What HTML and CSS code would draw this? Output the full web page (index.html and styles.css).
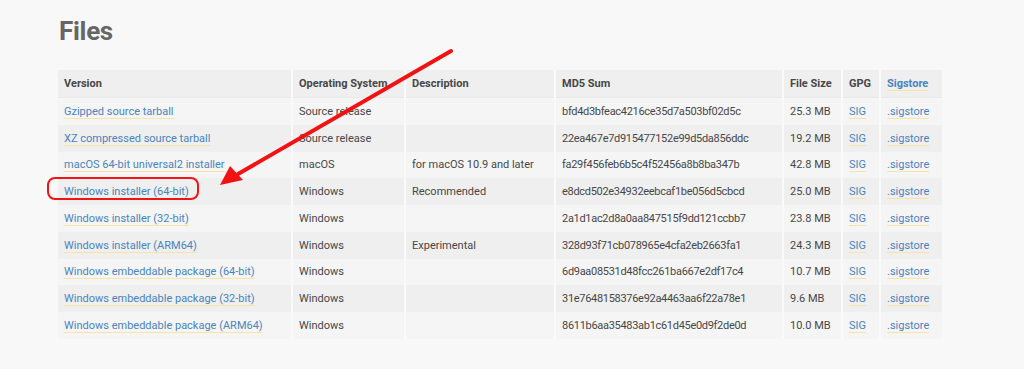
FILE: index.html
```html
<!DOCTYPE html>
<html lang="en">
<head>
    <meta charset="UTF-8">
    <meta name="viewport" content="width=device-width, initial-scale=1.0">
    <title>Files</title>
    <link rel="stylesheet" href="styles.css">
</head>
<body>
    <div class="page">
        <h2 class="title">Files</h2>

        <table class="files">
            <colgroup>
                <col class="c-version">
                <col class="c-os">
                <col class="c-desc">
                <col class="c-md5">
                <col class="c-size">
                <col class="c-gpg">
                <col class="c-sig">
            </colgroup>
            <thead>
                <tr>
                    <th>Version</th>
                    <th>Operating System</th>
                    <th>Description</th>
                    <th>MD5 Sum</th>
                    <th>File Size</th>
                    <th>GPG</th>
                    <th><a href="#">Sigstore</a></th>
                </tr>
            </thead>
            <tbody>
                <tr>
                    <td><a href="#">Gzipped source tarball</a></td>
                    <td>Source release</td>
                    <td></td>
                    <td class="md5">bfd4d3bfeac4216ce35d7a503bf02d5c</td>
                    <td>25.3 MB</td>
                    <td><a href="#">SIG</a></td>
                    <td><a href="#">.sigstore</a></td>
                </tr>
                <tr>
                    <td><a href="#">XZ compressed source tarball</a></td>
                    <td>Source release</td>
                    <td></td>
                    <td class="md5">22ea467e7d915477152e99d5da856ddc</td>
                    <td>19.2 MB</td>
                    <td><a href="#">SIG</a></td>
                    <td><a href="#">.sigstore</a></td>
                </tr>
                <tr>
                    <td><a href="#">macOS 64-bit universal2 installer</a></td>
                    <td>macOS</td>
                    <td>for macOS 10.9 and later</td>
                    <td class="md5">fa29f456feb6b5c4f52456a8b8ba347b</td>
                    <td>42.8 MB</td>
                    <td><a href="#">SIG</a></td>
                    <td><a href="#">.sigstore</a></td>
                </tr>
                <tr>
                    <td><a href="#">Windows installer (64-bit)</a></td>
                    <td>Windows</td>
                    <td>Recommended</td>
                    <td class="md5">e8dcd502e34932eebcaf1be056d5cbcd</td>
                    <td>25.0 MB</td>
                    <td><a href="#">SIG</a></td>
                    <td><a href="#">.sigstore</a></td>
                </tr>
                <tr>
                    <td><a href="#">Windows installer (32-bit)</a></td>
                    <td>Windows</td>
                    <td></td>
                    <td class="md5">2a1d1ac2d8a0aa847515f9dd121ccbb7</td>
                    <td>23.8 MB</td>
                    <td><a href="#">SIG</a></td>
                    <td><a href="#">.sigstore</a></td>
                </tr>
                <tr>
                    <td><a href="#">Windows installer (ARM64)</a></td>
                    <td>Windows</td>
                    <td>Experimental</td>
                    <td class="md5">328d93f71cb078965e4cfa2eb2663fa1</td>
                    <td>24.3 MB</td>
                    <td><a href="#">SIG</a></td>
                    <td><a href="#">.sigstore</a></td>
                </tr>
                <tr>
                    <td><a href="#">Windows embeddable package (64-bit)</a></td>
                    <td>Windows</td>
                    <td></td>
                    <td class="md5">6d9aa08531d48fcc261ba667e2df17c4</td>
                    <td>10.7 MB</td>
                    <td><a href="#">SIG</a></td>
                    <td><a href="#">.sigstore</a></td>
                </tr>
                <tr>
                    <td><a href="#">Windows embeddable package (32-bit)</a></td>
                    <td>Windows</td>
                    <td></td>
                    <td class="md5">31e7648158376e92a4463aa6f22a78e1</td>
                    <td>9.6 MB</td>
                    <td><a href="#">SIG</a></td>
                    <td><a href="#">.sigstore</a></td>
                </tr>
                <tr>
                    <td><a href="#">Windows embeddable package (ARM64)</a></td>
                    <td>Windows</td>
                    <td></td>
                    <td class="md5">8611b6aa35483ab1c61d45e0d9f2de0d</td>
                    <td>10.0 MB</td>
                    <td><a href="#">SIG</a></td>
                    <td><a href="#">.sigstore</a></td>
                </tr>
            </tbody>
        </table>

        <!-- annotation drawn over the screenshot -->
        <svg class="markup" width="1024" height="369" viewBox="0 0 1024 369">
            <rect x="48" y="178" width="150" height="21" rx="7" fill="none" stroke="#f01414" stroke-width="2"/>
            <line x1="451" y1="51" x2="238" y2="174" stroke="#f21212" stroke-width="4" stroke-linecap="round"/>
            <polygon points="220,185 230,166 243,180" fill="#f21212"/>
        </svg>
    </div>
</body>
</html>
```

FILE: styles.css
```css
body{
    margin: 0;
    background-color: #f8f8f8;
    font-family: "Roboto", "Noto Sans", Arial, sans-serif;
    color: #474747;
}

.page{
    position: relative;
    width: 1024px;
    height: 369px;
    padding: 18px 0 0 58px;
    box-sizing: border-box;
}

.title{
    margin: 0 0 26px 1px;
    font-size: 26px;
    line-height: 26px;
    font-weight: bold;
    color: #666;
    letter-spacing: -0.3px;
}

.files{
    table-layout: fixed;
    border-collapse: collapse;
    width: 884px;
    font-size: 11px;
}

.c-version{ width: 234px; }
.c-os{ width: 113px; }
.c-desc{ width: 150px; }
.c-md5{ width: 228px; }
.c-size{ width: 59px; }
.c-gpg{ width: 38px; }
.c-sig{ width: 62px; }

.files th,
.files td{
    height: 26.75px;
    padding: 0 6px;
    text-align: left;
    white-space: nowrap;
    border-right: 2px solid #fafafa;
}

.files th:last-child,
.files td:last-child{
    border-right: none;
}

.files th{
    height: 27px;
    font-weight: bold;
    background-color: #efefef;
    border-bottom: 1px solid #e9e9e9;
}

.files .md5{
    letter-spacing: -0.3px;
}

.files tbody tr:nth-child(odd){
    background-color: #f5f5f5;
}

.files tbody tr:nth-child(even){
    background-color: #efefef;
}

.files a{
    color: #4a83bd;
    text-decoration: none;
    border-bottom: 1px solid #fbe3a4;
}

.markup{
    position: absolute;
    left: 0;
    top: 0;
    pointer-events: none;
}
```
